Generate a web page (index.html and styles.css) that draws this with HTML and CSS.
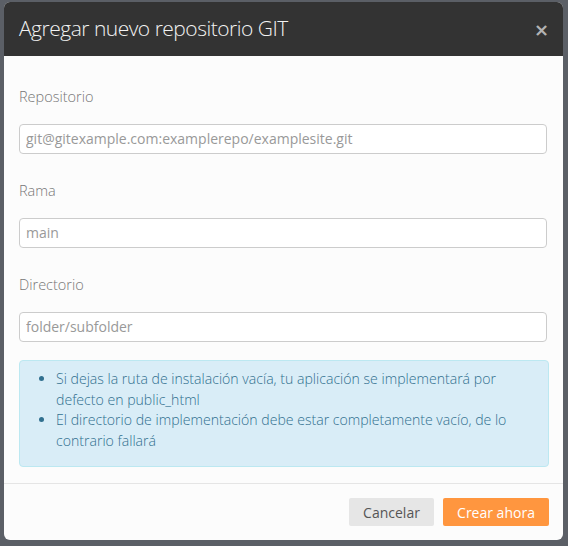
FILE: index.html
```html
<!DOCTYPE html>
<html lang="es">
<head>
<meta charset="utf-8">
<title>Agregar nuevo repositorio GIT</title>
<link rel="stylesheet" href="styles.css">
</head>
<body>
<div class="backdrop">
  <div class="modal">
    <div class="modal-header">
      <h4 class="modal-title">Agregar nuevo repositorio GIT</h4>
      <span class="close">&times;</span>
    </div>
    <div class="modal-body">
      <div class="form-group">
        <label class="label">Repositorio</label>
        <input class="form-control" type="text" placeholder="git@gitexample.com:examplerepo/examplesite.git">
      </div>
      <div class="form-group">
        <label class="label">Rama</label>
        <input class="form-control" type="text" placeholder="main">
      </div>
      <div class="form-group last">
        <label class="label">Directorio</label>
        <input class="form-control" type="text" placeholder="folder/subfolder">
      </div>
      <div class="alert">
        <ul class="alert-list">
          <li>Si dejas la ruta de instalación vacía, tu aplicación se implementará por defecto en public_html</li>
          <li>El directorio de implementación debe estar completamente vacío, de lo contrario fallará</li>
        </ul>
      </div>
    </div>
    <div class="modal-footer">
      <button class="btn btn-default">Cancelar</button>
      <button class="btn btn-primary">Crear ahora</button>
    </div>
  </div>
</div>
</body>
</html>
```
FILE: styles.css
```css
* { box-sizing: border-box; }
html, body { margin: 0; padding: 0; }
body {
  background: #5b5f66;
  font-family: "Open Sans", "Noto Sans", sans-serif;
  width: 568px;
  height: 546px;
  overflow: hidden;
}
.backdrop {
  padding: 2px 5px 0 4px;
}
.modal {
  width: 559px;
  height: 538px;
  background: #fcfcfc;
  border-radius: 6px;
  overflow: hidden;
  display: flex;
  flex-direction: column;
}
.modal-header {
  background: #333333;
  height: 54px;
  display: flex;
  align-items: center;
  justify-content: space-between;
  padding: 0 14px 0 15px;
}
.modal-title {
  margin: 0;
  font-size: 21px;
  font-weight: 300;
  letter-spacing: -0.5px;
  color: #f2f2f2;
  line-height: 28px;
  padding-bottom: 2px;
}
.close {
  color: #b3b3b3;
  font-size: 18px;
  font-weight: 700;
  line-height: 1;
  font-family: "DejaVu Sans", sans-serif;
  padding-top: 2px;
}
.modal-body {
  padding: 31px 14px 16px 15px;
  flex: 1;
}
.form-group {
  margin-bottom: 27px;
}
.form-group.last {
  margin-bottom: 18px;
}
.label {
  display: block;
  font-size: 14.5px;
  font-weight: 300;
  line-height: 20px;
  color: #777;
  margin-bottom: 17px;
}
.form-control {
  display: block;
  width: 528px;
  height: 30px;
  border: 1px solid #cccccc;
  border-radius: 4px;
  background: #fff;
  padding: 4px 6px;
  font-family: "Open Sans", "Noto Sans", sans-serif;
  font-size: 14px;
  color: #555;
  outline: none;
}
.form-control::placeholder {
  color: #999;
  opacity: 1;
}
.alert {
  background: #d9edf7;
  border: 1px solid #bce8f1;
  border-radius: 4px;
  color: #31708f;
  padding: 8px 14px 14px 15px;
}
.alert-list {
  margin: 0;
  padding-left: 21px;
  font-size: 14.1px;
  font-weight: 300;
  line-height: 20.8px;
}
.modal-footer {
  border-top: 1px solid #e5e5e5;
  height: 57px;
  display: flex;
  justify-content: flex-end;
  align-items: flex-start;
  gap: 9px;
  padding: 14px 14px 0 0;
}
.btn {
  height: 28px;
  border: none;
  border-radius: 2px;
  font-family: "Open Sans", "Noto Sans", sans-serif;
  font-size: 14px;
  padding: 0 14px;
  cursor: pointer;
}
.btn-default {
  background: #e6e6e6;
  color: #555;
  width: 85px;
}
.btn-primary {
  background: #ff963f;
  color: #fff;
  width: 106px;
}
```
